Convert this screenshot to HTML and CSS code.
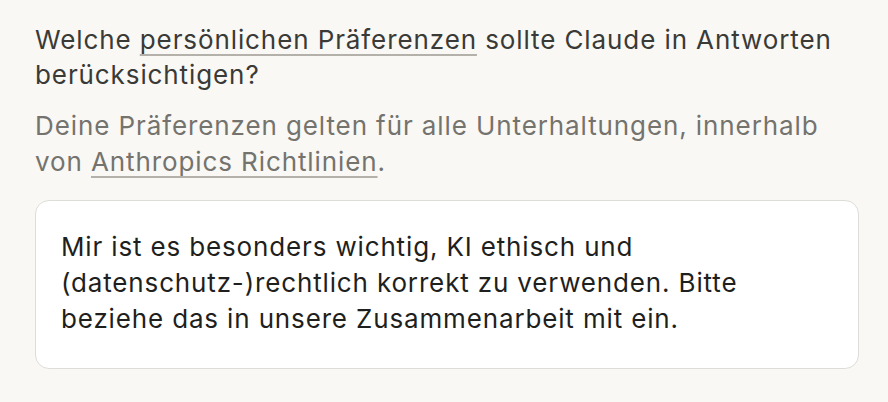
FILE: index.html
```html
<!DOCTYPE html>
<html lang="de">
<head>
<meta charset="utf-8">
<link rel="stylesheet" href="styles.css">
</head>
<body>
<main class="page">
  <h2 class="title">Welche <span class="ul">persönlichen Präferenzen</span> sollte Claude in Antworten berücksichtigen?</h2>
  <p class="sub">Deine Präferenzen gelten für alle Unterhaltungen, innerhalb von <a class="ul link">Anthropics Richtlinien</a>.</p>
  <div class="box">Mir ist es besonders wichtig, KI ethisch und (datenschutz-)rechtlich korrekt zu verwenden. Bitte beziehe das in unsere Zusammenarbeit mit ein.</div>
</main>
</body>
</html>
```
FILE: styles.css
```css
html, body { margin: 0; padding: 0; background: #f9f8f5; }
body { font-family: Inter, "Noto Sans", sans-serif; }
.page { padding: 22px 29px 0 35px; }
.title { margin: 0; font-size: 26px; font-weight: 400; line-height: 35px; color: #3a3a37; letter-spacing: 0.9px; }
.ul { text-decoration: underline; text-decoration-color: #b3b1aa; text-decoration-thickness: 1.5px; text-underline-offset: 5px; }
.sub { margin: 16px 0 0; font-size: 26px; line-height: 36px; color: #74736d; letter-spacing: 0.9px; }
.link { color: inherit; }
.box { margin-top: 20px; background: #fff; border: 1.5px solid #dddcd7; border-radius: 14px; padding: 28px 24px 31px 25px; font-size: 26px; line-height: 36px; color: #1f1f1d; letter-spacing: 0.85px; }
```
